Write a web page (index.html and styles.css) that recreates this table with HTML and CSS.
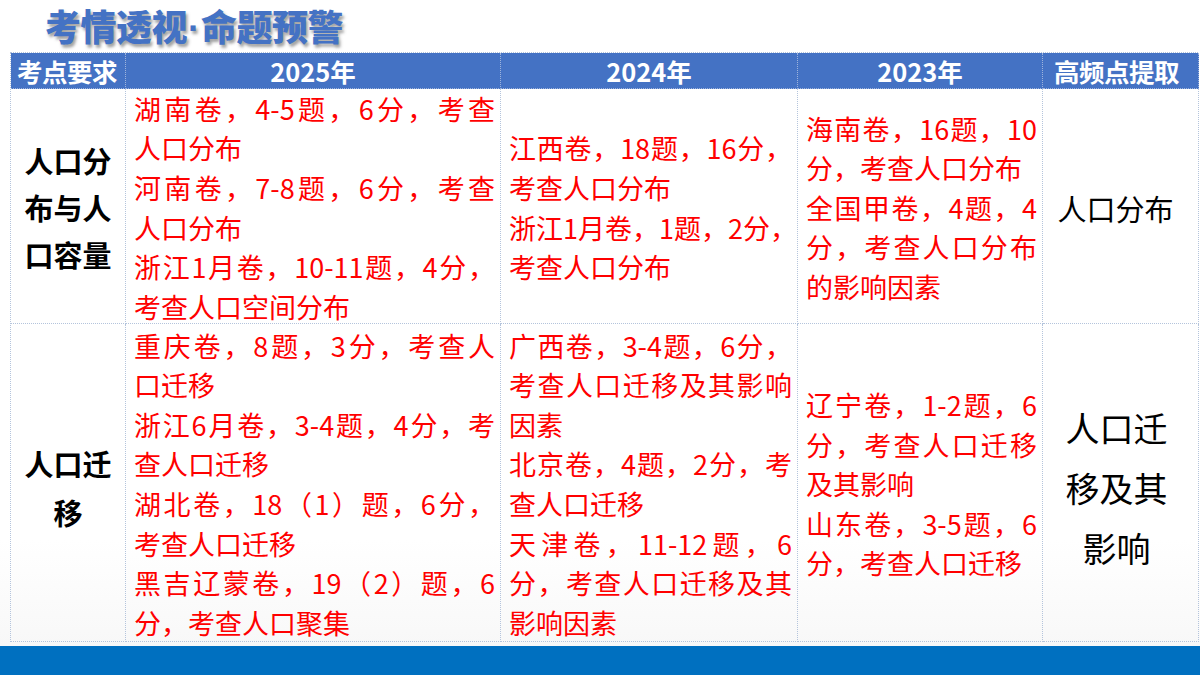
FILE: index.html
```html
<!DOCTYPE html>
<html lang="zh-CN">
<head>
<meta charset="utf-8">
<title>考情透视·命题预警</title>
<link rel="stylesheet" href="styles.css">
</head>
<body>
<div class="slide">
  <div class="title-bar"><h1 class="title">考情透视<span class="dot">·</span>命题预警</h1></div>
  <div class="table">
    <div class="th th-first">考点要求</div>
    <div class="th">2025年</div>
    <div class="th">2024年</div>
    <div class="th">2023年</div>
    <div class="th th-last">高频点提取</div>

    <div class="td topic"><div class="topic-text">人口分<br>布与人<br>口容量</div></div>
    <div class="td red">
      <div class="j">湖南卷，4-5题，6分，考查</div>
      <div>人口分布</div>
      <div class="j">河南卷，7-8题，6分，考查</div>
      <div>人口分布</div>
      <div class="j">浙江1月卷，10-11题，4分，</div>
      <div>考查人口空间分布</div>
    </div>
    <div class="td red">
      <div class="j">江西卷，18题，16分，</div>
      <div>考查人口分布</div>
      <div class="j">浙江1月卷，1题，2分，</div>
      <div>考查人口分布</div>
    </div>
    <div class="td red">
      <div class="j">海南卷，16题，10</div>
      <div>分，考查人口分布</div>
      <div class="j">全国甲卷，4题，4</div>
      <div class="j">分，考查人口分布</div>
      <div>的影响因素</div>
    </div>
    <div class="td point"><div class="point-sm">人口分布</div></div>

    <div class="td topic"><div class="topic-text topic-text-2">人口迁<br>移</div></div>
    <div class="td red">
      <div class="j">重庆卷，8题，3分，考查人</div>
      <div>口迁移</div>
      <div class="j">浙江6月卷，3-4题，4分，考</div>
      <div>查人口迁移</div>
      <div class="j">湖北卷，18（1）题，6分，</div>
      <div>考查人口迁移</div>
      <div class="j">黑吉辽蒙卷，19（2）题，6</div>
      <div>分，考查人口聚集</div>
    </div>
    <div class="td red">
      <div class="j">广西卷，3-4题，6分，</div>
      <div class="j">考查人口迁移及其影响</div>
      <div>因素</div>
      <div class="j">北京卷，4题，2分，考</div>
      <div>查人口迁移</div>
      <div class="j">天津卷，11-12题，6</div>
      <div class="j">分，考查人口迁移及其</div>
      <div>影响因素</div>
    </div>
    <div class="td red">
      <div class="j">辽宁卷，1-2题，6</div>
      <div class="j">分，考查人口迁移</div>
      <div>及其影响</div>
      <div class="j">山东卷，3-5题，6</div>
      <div>分，考查人口迁移</div>
    </div>
    <div class="td point"><div class="point-lg">人口迁<br>移及其<br>影响</div></div>
  </div>
  <div class="footer-bar"></div>
</div>
</body>
</html>
```
FILE: styles.css
```css
html, body {
  margin: 0;
  padding: 0;
  background: #ffffff;
}

.slide {
  width: 1200px;
  height: 675px;
  display: flex;
  flex-direction: column;
  font-family: "Noto Sans CJK SC", "Noto Sans", sans-serif;
  background: linear-gradient(to bottom, #ffffff 0%, #ffffff 80%, #f6f6f6 100%);
  overflow: hidden;
}

.title-bar {
  height: 52px;
  padding-left: 45px;
  box-sizing: border-box;
}

.title {
  margin: 0;
  padding-top: 3px;
  font-size: 36px;
  line-height: 44px;
  font-weight: 900;
  color: #4472c4;
  letter-spacing: -0.5px;
  text-shadow: 2px 3px 3px rgba(70, 70, 70, 0.5);
}

.dot {
  font-family: "Liberation Sans", "Noto Sans", sans-serif;
  font-weight: 700;
  letter-spacing: 0;
  padding: 0 1px;
}

.table {
  margin-left: 10px;
  width: 1188px;
  display: grid;
  grid-template-columns: 115px 375px 297px 245px 156px;
  grid-template-rows: 36px 235px 318px;
  border: 1px dotted #b4c4dc;
  border-right: none;
  border-bottom: none;
  box-sizing: border-box;
}

.th {
  background: #4472c4;
  color: #ffffff;
  font-weight: 700;
  font-size: 25.5px;
  line-height: 36px;
  text-align: center;
  border-right: 1px dotted #9fb4dc;
  border-bottom: 1px dotted #9fb4dc;
  box-sizing: border-box;
  white-space: nowrap;
  overflow: hidden;
}

.th-first {
  text-align: left;
  padding-left: 6px;
  letter-spacing: -0.5px;
}

.th-last {
  padding-right: 8px;
  letter-spacing: -0.5px;
}

.td {
  border-right: 1px dotted #b4c4dc;
  border-bottom: 1px dotted #b4c4dc;
  box-sizing: border-box;
  display: flex;
  flex-direction: column;
  justify-content: center;
}

.red {
  color: #ff0000;
  font-size: 27px;
  line-height: 39.6px;
  padding: 3px 5px 0 8px;
  white-space: nowrap;
}

.red .j {
  text-align: justify;
  text-align-last: justify;
}

.topic {
  align-items: center;
}

.topic-text {
  font-weight: 700;
  font-size: 29px;
  line-height: 47px;
  color: #000000;
  text-align: center;
  margin-top: 2px;
}

.topic-text-2 {
  line-height: 49px;
  margin-top: 10px;
}

.point {
  align-items: center;
  color: #000000;
  text-align: center;
  padding-right: 10px;
}

.point-sm {
  font-size: 29px;
  line-height: 40px;
  margin-top: 4px;
}

.point-lg {
  font-size: 34px;
  line-height: 60px;
  margin-top: 10px;
  padding-left: 2px;
}

.footer-bar {
  margin-top: auto;
  height: 29px;
  background: #0070c0;
}
```
